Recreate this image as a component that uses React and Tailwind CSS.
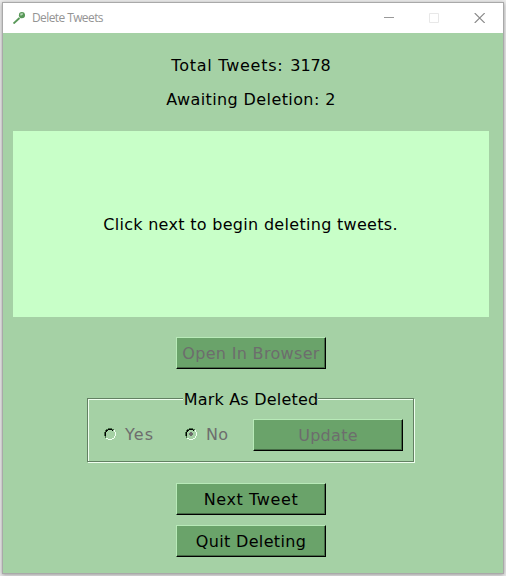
import React from "react";

function Button({ children, disabled, className = "" }) {
  return (
    <button
      disabled={disabled}
      className={`flex h-8 w-[150px] shrink-0 items-center justify-center whitespace-nowrap border border-t-[#b8eab8] border-l-[#b8eab8] border-r-black border-b-black bg-[#6aa36a] pt-[2px] shadow-[inset_-1px_-1px_0_#456a45] ${
        disabled ? "text-[#6d6d6d]" : "text-black"
      } ${className}`}
    >
      {children}
    </button>
  );
}

function Radio({ label, checked, className = "" }) {
  return (
    <label className={`flex items-center gap-[9px] text-[#6d6d6d] ${className}`}>
      <svg width="12" height="12" viewBox="0 0 12 12" shapeRendering="crispEdges" fill="none" className="shrink-0">
        <path d="M4 .5h4M2 1.5h2M8 1.5h2M1.5 2v2M.5 4v4M1.5 8v2" stroke="#456a45" />
        <path d="M4 1.5h4M2 2.5h2M8 2.5h1M2.5 3v1M1.5 4v4" stroke="#000" />
        <path d="M10.5 2v2M11.5 4v4M10.5 8v2M8 10.5h2M4 11.5h4M2 10.5h2" stroke="#f0fff0" />
        {checked && <path d="M5 4h2v1h1v2H7v1H5V7H4V5h1z" fill="#6d6d6d" />}
      </svg>
      <span className="pt-[2px]">{label}</span>
    </label>
  );
}

function TitleBar() {
  return (
    <header className="flex h-[30px] shrink-0 items-center bg-white pl-[10px] pr-[18px]">
      <svg width="12" height="12" viewBox="0 0 12 12" fill="none">
        <path d="M.5 11.5L6.5 6" stroke="#589858" strokeWidth="1.9" />
        <circle cx="9" cy="3.2" r="3.1" fill="#589858" />
        <path d="M8 3.5V2h2" stroke="#d5ead5" strokeWidth="1.1" />
      </svg>
      <span className="ml-[7px] whitespace-nowrap font-['Open_Sans','Noto_Sans',sans-serif] text-[12px] leading-4 tracking-[-0.6px] text-[#949494]">
        Delete Tweets
      </span>
      <div className="ml-auto flex items-center gap-[35px]">
        <svg width="10" height="10" viewBox="0 0 10 10">
          <path d="M0 4.5h10" stroke="#999" />
        </svg>
        <svg width="10" height="10" viewBox="0 0 10 10">
          <path d="M.5.5h9v9h-9z" fill="none" stroke="#e8e8e8" />
        </svg>
        <svg width="11" height="10" viewBox="0 0 11 10">
          <path d="M.7 0l10 10M10.7 0L.7 10" stroke="#888" strokeWidth="1.1" />
        </svg>
      </div>
    </header>
  );
}

export default function App() {
  return (
    <div className="h-[576px] w-[506px] overflow-hidden bg-[#ececec] pl-[2px] pt-[2px]">
      <div className="flex h-[572px] w-[502px] flex-col border border-[#a9a9a9] bg-[#a5d1a5] font-[Verdana,'DejaVu_Sans',sans-serif] text-[16px] leading-5 text-black shadow-[0_1px_4px_rgba(0,0,0,0.35)]">
        <TitleBar />
        <main className="flex flex-1 flex-col items-center pr-1">
          <p className="mt-[23px] tracking-[0.75px]">
            Total Tweets: <span className="ml-px tracking-[-0.1px]">3178</span>
          </p>
          <p className="mt-[14px] tracking-[0.4px]">Awaiting Deletion: 2</p>
          <section className="mt-[21px] flex h-[186px] w-[476px] items-center justify-center bg-[#c8ffc8] pr-px pt-[2px] tracking-[0.3px]">
            Click next to begin deleting tweets.
          </section>
          <Button disabled className="mt-5 tracking-[0.33px]">Open In Browser</Button>
          <div className="mr-px mt-[29px] flex h-16 w-[327px] shrink-0 flex-col border border-[#638063] shadow-[1px_1px_0_#f0fff0,inset_1px_1px_0_#f0fff0]">
            <h2 className="-mt-[9px] self-center bg-[#a5d1a5] pl-px tracking-[0.2px]">Mark As Deleted</h2>
            <div className="mt-[9px] flex pl-4">
              <Radio label="Yes" className="h-[30px] w-[81px] tracking-[1.1px]" />
              <Radio label="No" checked className="h-[30px] w-[68px] tracking-[0.3px]" />
              <Button disabled className="tracking-[0.3px]">Update</Button>
            </div>
          </div>
          <Button className="mt-[21px] tracking-[0.6px]">Next Tweet</Button>
          <Button className="mt-[10px] tracking-[0.33px]">Quit Deleting</Button>
        </main>
      </div>
    </div>
  );
}
